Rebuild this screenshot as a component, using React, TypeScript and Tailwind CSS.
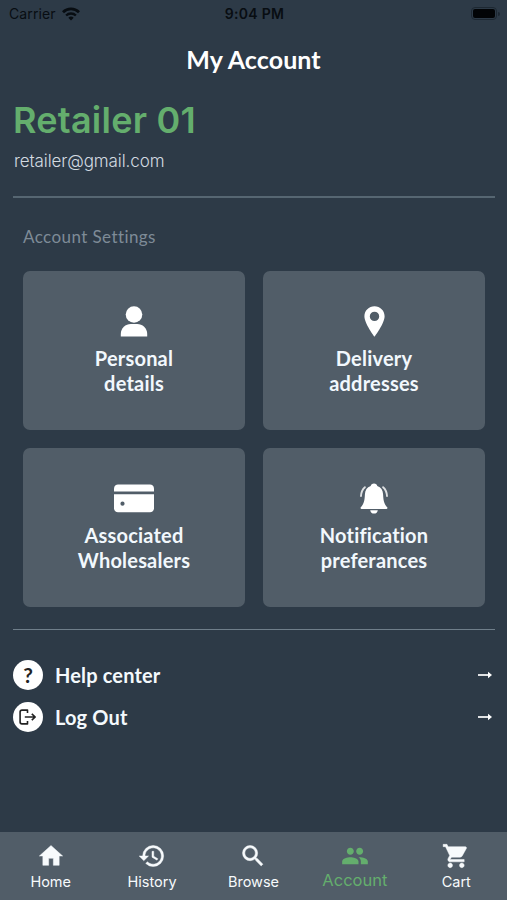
import React from "react";
import type { IconType } from "react-icons";
import {
  MdHistory,
  MdHome,
  MdPeople,
  MdSearch,
  MdShoppingCart,
} from "react-icons/md";

const PersonIcon = () => (
  <svg className="w-[28px] h-[31px]" viewBox="0 0 28 31" fill="currentColor">
    <circle cx="14" cy="8.5" r="8.3" />
    <path d="M.8 30.6v-2.6C.8 22 5.600 18 10.800 18h6.400c5.200 0 10 4 10 10v2.600z" />
  </svg>
);

const PinIcon = () => (
  <svg className="w-[21px] h-[31px]" viewBox="0 0 21 31" fill="currentColor">
    <path
      fillRule="evenodd"
      d="M10.5.3C4.9.3.4 4.7.4 10.2c0 7.2 10.1 20.5 10.1 20.5s10.1-13.3 10.1-20.5C20.6 4.7 16.1.3 10.5.3zm0 14.8a4.7 4.7 0 1 1 0-9.4 4.7 4.7 0 0 1 0 9.4z"
    />
  </svg>
);

const CardIcon = () => (
  <svg className="w-[40px] h-[29px]" viewBox="0 0 40 29" fill="currentColor">
    <path d="M0 7.6V4.5C0 2 2 .5 4 .5h32c2 0 4 1.5 4 4v3.1z" />
    <path
      fillRule="evenodd"
      d="M0 10.200h40v14c0 2.500-2 4-4 4H4c-2 0-4-1.500-4-4zM8.500 17.600a2.100 2.100 0 1 0 0 4.200 2.100 2.100 0 0 0 0-4.200z"
    />
  </svg>
);

const BellIcon = () => (
  <svg className="w-[28px] h-[31px]" viewBox="0 0 28 31" fill="currentColor">
    <path d="M14 .4c-1.800 0-3.100 1.100-3.300 2.700C7 4.300 5.100 7.300 4.900 11.500 4.600 17 4.200 20.700.8 24.300c-.6.700-.2 1.700.7 1.700h25c.9 0 1.300-1 .7-1.700-3.400-3.600-3.800-7.300-4.100-12.800-.2-4.200-2.100-7.200-5.800-8.400C17.100 1.500 15.800.4 14 .4z" />
    <path d="M10.200 27.200h7.600c-.2 2-1.700 3.400-3.800 3.400s-3.600-1.400-3.800-3.400z" />
    <g fill="none" stroke="currentColor" strokeWidth="1.900" strokeLinecap="round" opacity=".8">
      <path d="M4.900 4.200C2.500 6.300 1.200 9.300 1 13" />
      <path d="M23.100 4.200c2.400 2.100 3.700 5.100 3.900 8.800" />
    </g>
  </svg>
);

const LogoutIcon = () => (
  <svg
    className="w-[18px] h-[16px]"
    viewBox="0 0 18 16"
    fill="none"
    stroke="currentColor"
    strokeWidth="1.600"
    strokeLinejoin="round"
  >
    <path d="M8.500 4V1.100H3Q1.100 1.100 1.100 3v10q0 1.900 1.900 1.900h5.500V12" />
    <path d="M5.800 8H16M12.800 4.800 16.200 8l-3.400 3.200" />
  </svg>
);

const ArrowIcon = () => (
  <svg className="w-[14px] h-[8px]" viewBox="0 0 14 8" fill="currentColor">
    <path d="M0 3h11v2H0z" opacity=".85" />
    <path d="M10 .8 14 4l-4 3.200z" />
  </svg>
);

const settings = [
  { icon: PersonIcon, lines: ["Personal", "details"] },
  { icon: PinIcon, lines: ["Delivery", "addresses"] },
  { icon: CardIcon, lines: ["Associated", "Wholesalers"] },
  { icon: BellIcon, lines: ["Notification", "preferances"] },
];

const tabs: { label: string; icon: IconType; active?: boolean }[] = [
  { label: "Home", icon: MdHome },
  { label: "History", icon: MdHistory },
  { label: "Browse", icon: MdSearch },
  { label: "Account", icon: MdPeople, active: true },
  { label: "Cart", icon: MdShoppingCart },
];

function StatusBar() {
  return (
    <div className="grid grid-cols-3 items-center h-[27px] pl-[9px] pr-[7px] text-[#080d12] text-[14px]">
      <div className="flex items-center gap-[6px]">
        <span className="tracking-[0.1px]">Carrier</span>
        <svg className="w-[18px] h-[14px]" viewBox="0 0 18 14" fill="none" stroke="currentColor">
          <path d="M1 5.200a11.500 11.500 0 0 1 16 0" strokeWidth="2.800" />
          <path d="M4.100 8.500a7 7 0 0 1 9.800 0" strokeWidth="2.300" />
          <path d="M9 13.600 6.300 10.800a3.900 3.900 0 0 1 5.400 0z" fill="currentColor" stroke="none" />
        </svg>
      </div>
      <div className="text-center font-semibold whitespace-nowrap tracking-[0.3px]">
        9:04 PM
      </div>
      <div className="flex items-center justify-end gap-[1px]">
        <div className="w-[26px] h-[13px] rounded-[4px] border border-[#1d2832] p-[1px]">
          <div className="h-full rounded-[2px] bg-[#020406]" />
        </div>
        <div className="w-[2px] h-[4px] rounded-r-full bg-[#1d2832]" />
      </div>
    </div>
  );
}

function MenuRow({ icon, label }: { icon: React.ReactNode; label: string }) {
  return (
    <button className="flex items-center w-full h-[30px] text-left">
      <span className="flex items-center justify-center w-[30px] h-[30px] rounded-full bg-white text-[#222]">
        {icon}
      </span>
      <span className="flex-1 ml-3 font-[Lato,sans-serif] font-bold text-[20px] tracking-[0.15px] text-[#f4f9fd]">
        {label}
      </span>
      <span className="mr-[3px]">
        <ArrowIcon />
      </span>
    </button>
  );
}

export default function App() {
  return (
    <div className="flex flex-col w-full h-screen overflow-hidden bg-[#2d3a47] font-[Inter,sans-serif] text-white">
      <StatusBar />

      <h1 className="h-[64px] leading-[64px] text-center font-[Lato,sans-serif] font-bold text-[25px] tracking-[0.1px]">
        My Account
      </h1>

      <main className="flex-1 pl-[13px] pr-[12px]">
        <h2 className="h-[57px] leading-[59px] font-semibold text-[36px] tracking-[0.25px] text-[#64ae6d]">
          Retailer 01
        </h2>
        <p className="h-[26px] leading-[26px] pl-[1px] text-[17px] tracking-[-0.1px] font-light text-[#d3dae1]">
          retailer@gmail.com
        </p>

        <section className="mt-[22px] border-t-2 border-b border-t-[#566672] border-b-[#6f7e8a] px-[10px] h-[434px]">
          <p className="mt-[27px] h-[24px] leading-[24px] font-[Lato,sans-serif] text-[17px] tracking-[0.42px] text-[#7e8b97]">
            Account Settings
          </p>
          <div className="grid grid-cols-2 gap-x-[18px] gap-y-[18px] mt-[22px]">
            {settings.map(({ icon: Icon, lines }) => (
              <button
                key={lines[0]}
                className="flex flex-col items-center h-[159px] pt-[35px] rounded-[7px] bg-[#515d68]"
              >
                <span className="flex items-center h-[31px]">
                  <Icon />
                </span>
                <span className="mt-[9px] font-[Lato,sans-serif] font-bold text-[20px] leading-[24.500px] tracking-[0.2px] text-[#f2f8fd]">
                  {lines[0]}
                  <br />
                  {lines[1]}
                </span>
              </button>
            ))}
          </div>
        </section>

        <div className="flex flex-col gap-[12px] mt-[30px]">
          <MenuRow
            icon={<span className="font-[Lato,sans-serif] font-bold text-[21px]">?</span>}
            label="Help center"
          />
          <MenuRow icon={<LogoutIcon />} label="Log Out" />
        </div>
      </main>

      <nav className="grid grid-cols-5 h-[68px] pt-[10px] bg-[#515d68]">
        {tabs.map(({ label, icon: Icon, active }) => (
          <button
            key={label}
            className={`flex flex-col items-center ${active ? "text-[#64ae6d]" : "text-[#f7fafc]"}`}
          >
            <Icon
              className={`w-[28px] h-[28px] [&>path[fill=none]]:stroke-none ${
                active ? "" : "stroke-current stroke-[0.4]"
              }`}
            />
            <span
              className={
                active
                  ? "text-[16.500px] leading-[21px]"
                  : "text-[14.500px] leading-[24px]"
              }
            >
              {label}
            </span>
          </button>
        ))}
      </nav>
    </div>
  );
}
